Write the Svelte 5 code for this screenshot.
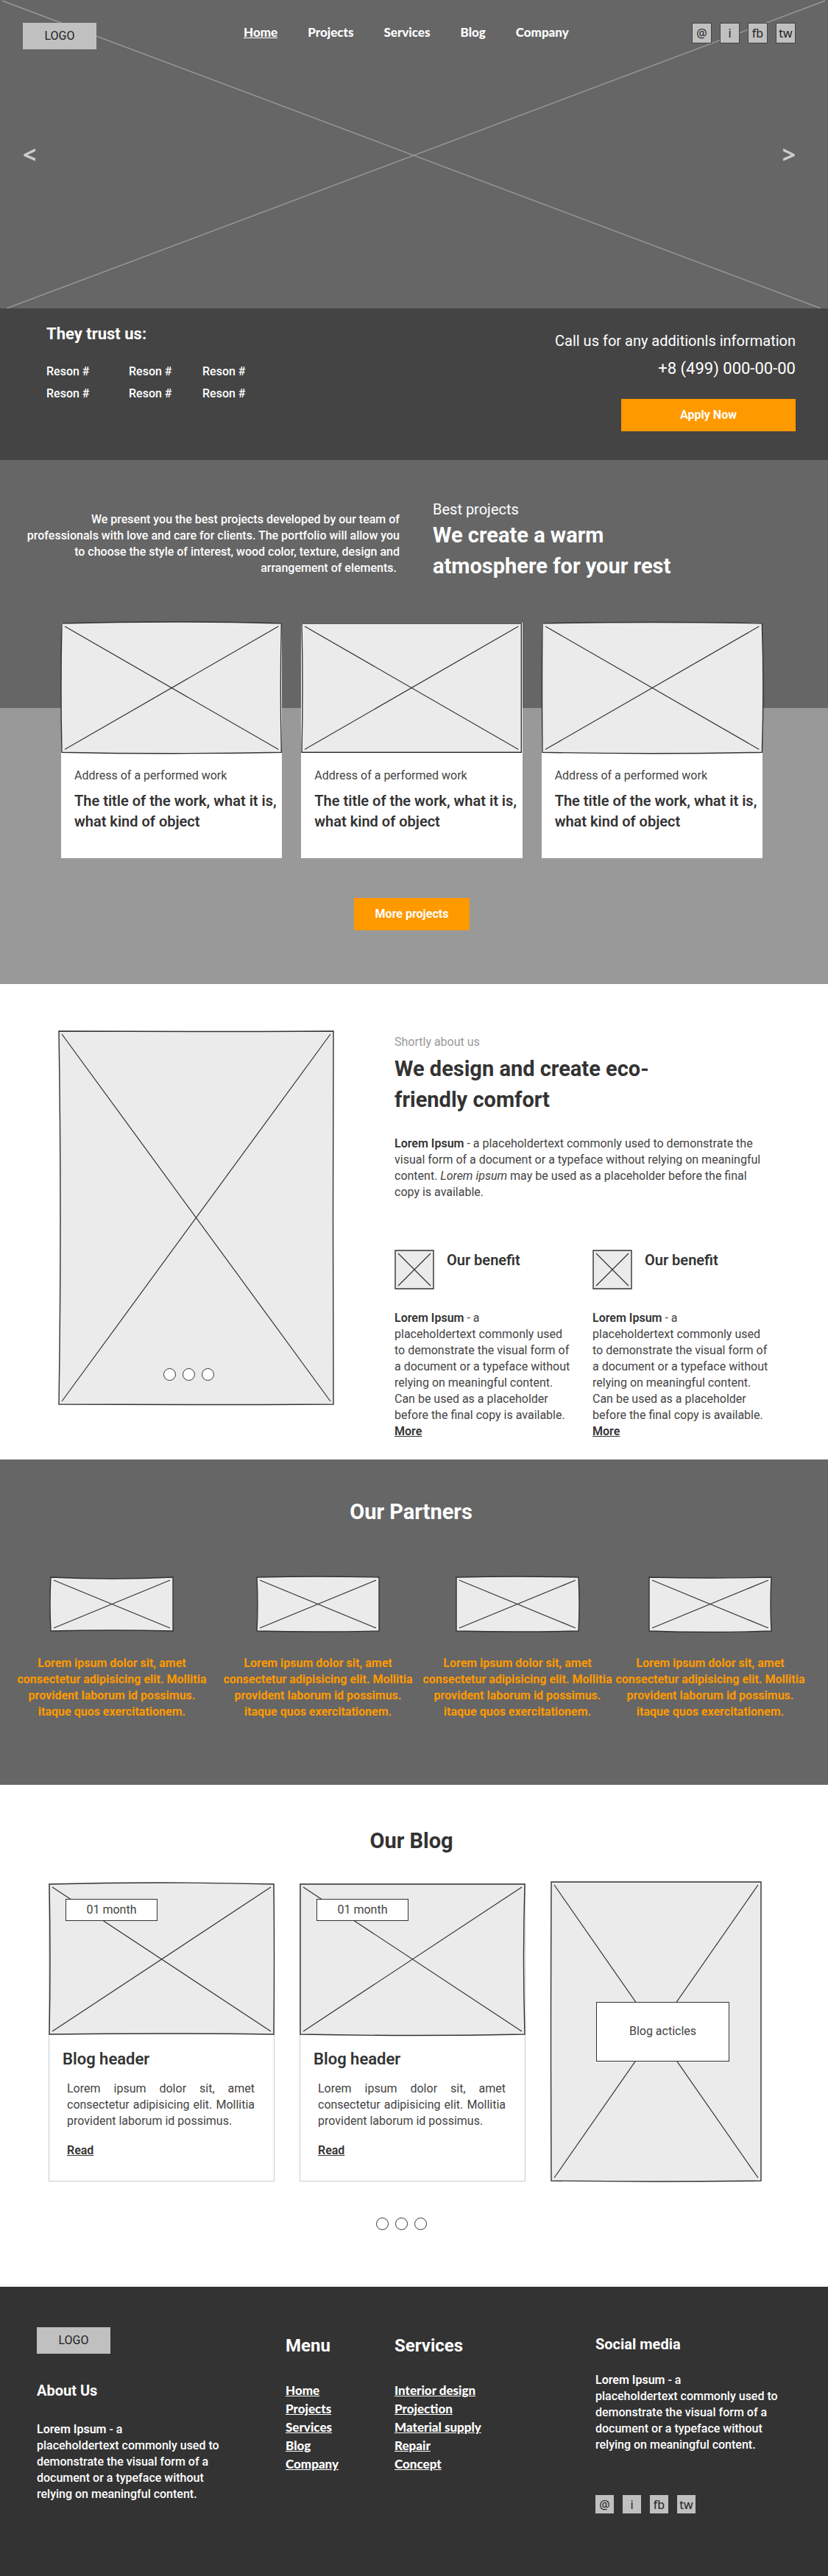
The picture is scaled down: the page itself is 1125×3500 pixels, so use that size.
<script>
  const menu = ['Home', 'Projects', 'Services', 'Blog', 'Company'];
  const services = ['Interior design', 'Projection', 'Material supply', 'Repair', 'Concept'];
  const socials = [
    { text: '@', label: 'Email' },
    { text: 'i', label: 'Instagram' },
    { text: 'fb', label: 'Facebook' },
    { text: 'tw', label: 'Twitter' }
  ];
  // Bow of the hand-drawn edges: top, right, bottom, left
  const projects = [[-4, -2, 3, -2], [0, 0, 0, 2], [-3, 3, 3, -1]];
  const partners = [[4, 0, -2, -2], [-2, 0, 2, 2], [-2, 2, 2, 0], [2, -2, 3, 0]];
  const posts = [[-4, 1, -2, 2], [0, -3, 3, 0]];
</script>

{#snippet sketch(w, h, [t, r, b, l])}
  <svg class="sketch" viewBox="0 0 {w} {h}" preserveAspectRatio="none" aria-hidden="true">
    <path
      class="frame"
      d="M1 1Q{w / 2} {1 + t} {w - 1} 1Q{w - 1 + r} {h / 2} {w - 1} {h - 1}Q{w / 2} {h - 1 + b} 1 {h - 1}Q{1 + l} {h / 2} 1 1Z"
    />
    <path class="cross" d="M5 5L{w - 5} {h - 5}M{w - 5} 5L5 {h - 5}" />
  </svg>
{/snippet}

{#snippet social(boxed)}
  <div class="social" class:boxed>
    {#each socials as s}
      <a href="#social" aria-label={s.label}>{s.text}</a>
    {/each}
  </div>
{/snippet}

{#snippet dots(name)}
  <div class="dots">
    {#each [1, 2, 3] as n}
      <button type="button" aria-label="{name} {n}"></button>
    {/each}
  </div>
{/snippet}

<div class="page">
  <header class="hero">
    <svg class="hero-cross" viewBox="0 0 1125 419" preserveAspectRatio="none" aria-hidden="true">
      <path d="M3 1L1115 419M1121 1L9 419" />
    </svg>
    <div class="topbar">
      <a class="logo" href="#home">LOGO</a>
      <nav class="nav" aria-label="Main">
        {#each menu as item, i}
          <a href="#{item.toLowerCase()}" class:active={i === 0}>{item}</a>
        {/each}
      </nav>
      {@render social(true)}
    </div>
    <div class="arrows">
      <button type="button" aria-label="Previous slide">&lt;</button>
      <button type="button" aria-label="Next slide">&gt;</button>
    </div>
  </header>

  <section class="trust">
    <div>
      <h2 class="h22">They trust us:</h2>
      <ul class="reasons">
        {#each Array(6) as _}
          <li>Reson #</li>
        {/each}
      </ul>
    </div>
    <div class="call">
      <p class="call-text">Call us for any additionls information</p>
      <p class="phone">+8 (499) 000-00-00</p>
      <button type="button" class="cta apply">Apply Now</button>
    </div>
  </section>

  <section class="best">
    <div class="intro">
      <p class="intro-text">
        We present you the best projects developed by our team of professionals with love and care for clients. The
        portfolio will allow you to choose the style of interest, wood color, texture, design and arrangement of
        elements.&nbsp;
      </p>
      <div>
        <p class="kicker">Best projects</p>
        <h2 class="h28 intro-title">We create a warm atmosphere for your rest</h2>
      </div>
    </div>
    <div class="works">
      <div class="work-row">
        {#each projects as bow}
          <article class="work">
            <div class="work-pic">{@render sketch(300, 177, bow)}</div>
            <div class="work-body">
              <p>Address of a performed work</p>
              <h3>The title of the work, what it is, what kind of object</h3>
            </div>
          </article>
        {/each}
      </div>
      <button type="button" class="cta more-projects">More projects</button>
    </div>
  </section>

  <section class="about">
    <div class="about-pic">
      {@render sketch(375, 509, [1, -1, 1, 4])}
      {@render dots('Photo')}
    </div>
    <div class="about-body">
      <p class="muted">Shortly about us</p>
      <h2 class="h28 about-title">We design and create eco-friendly comfort</h2>
      <p class="about-text">
        <b>Lorem Ipsum</b> - a placeholdertext commonly used to demonstrate the visual form of a document or a typeface
        without relying on meaningful content. <i>Lorem ipsum</i> may be used as a placeholder before the final copy is
        available.
      </p>
      <div class="benefits">
        {#each [1, 2] as _}
          <article>
            <div class="benefit-head">
              <div class="benefit-pic">{@render sketch(54, 54, [0, 0, 0, 0])}</div>
              <h3>Our benefit</h3>
            </div>
            <p>
              <b>Lorem Ipsum</b> - a<br />placeholdertext commonly used to demonstrate the visual form of a document or a
              typeface without relying on meaningful content. Can be used as a placeholder before the final copy is
              available.
            </p>
            <a class="more" href="#benefit">More</a>
          </article>
        {/each}
      </div>
    </div>
  </section>

  <section class="partners">
    <h2 class="h28">Our Partners</h2>
    <div class="partner-row">
      {#each partners as bow}
        <article class="partner">
          <div class="partner-pic">{@render sketch(168, 75, bow)}</div>
          <p>Lorem ipsum dolor sit, amet consectetur adipisicing elit. Mollitia provident laborum id possimus. itaque quos exercitationem.</p>
        </article>
      {/each}
    </div>
  </section>

  <section class="blog">
    <h2 class="h28">Our Blog</h2>
    <div class="posts">
      {#each posts as bow}
        <article class="post">
          <div class="post-pic">
            {@render sketch(307, 206, bow)}
            <span class="tag">01 month</span>
          </div>
          <div class="post-body">
            <h3 class="h22">Blog header</h3>
            <p>Lorem ipsum dolor sit, amet consectetur adipisicing elit. Mollitia provident laborum id possimus.</p>
            <a class="more" href="#post">Read</a>
          </div>
        </article>
      {/each}
      <div class="articles">
        {@render sketch(287, 408, [0, 0, 2, -1])}
        <a href="#articles">Blog acticles</a>
      </div>
    </div>
    {@render dots('Posts page')}
  </section>

  <footer class="footer">
    <div>
      <a class="logo" href="#home">LOGO</a>
      <h2 class="h20 about-us">About Us</h2>
      <p>
        <b>Lorem Ipsum</b> - a<br />placeholdertext commonly used to demonstrate the visual form of a document or a
        typeface without relying on meaningful content.
      </p>
    </div>
    <nav class="links" aria-label="Menu">
      <h2 class="h24">Menu</h2>
      {#each menu as item}
        <a href="#{item.toLowerCase()}">{item}</a>
      {/each}
    </nav>
    <nav class="links" aria-label="Services">
      <h2 class="h24">Services</h2>
      {#each services as item}
        <a href="#services">{item}</a>
      {/each}
    </nav>
    <div class="media">
      <h2 class="h20">Social media</h2>
      <p>
        <b>Lorem Ipsum</b> - a<br />placeholdertext commonly used to demonstrate the visual form of a document or a
        typeface without relying on meaningful content.
      </p>
      {@render social(false)}
    </div>
  </footer>
</div>

<style>
  :global(body) {
    margin: 0;
    background: #fff;
  }
  .page {
    font: 16px/22px Roboto, sans-serif;
    color: #444;
  }
  .page :is(h2, h3, p, ul) {
    margin: 0;
    padding: 0;
  }
  .page :is(div, a, button, article) {
    box-sizing: border-box;
  }
  button {
    font: inherit;
    margin: 0;
    padding: 0;
    border: 0;
    border-radius: 0;
    cursor: pointer;
  }
  a {
    color: inherit;
    text-decoration: none;
  }
  b,
  .more {
    font-weight: 600;
    color: #333;
  }
  h2,
  h3 {
    font-weight: 600;
    color: #333;
  }
  .h28 {
    font-size: 29px;
    line-height: 42px;
    font-weight: 700;
  }
  .h24 {
    font-size: 24px;
    line-height: 28px;
  }
  .h22 {
    font-size: 22px;
    line-height: 28px;
  }
  .h20,
  h3:not(.h22) {
    font-size: 20px;
    line-height: 28px;
  }
  .more {
    display: inline-block;
    text-decoration: underline;
  }
  .sketch {
    position: absolute;
    inset: 0;
    width: 100%;
    height: 100%;
    overflow: visible;
  }
  .sketch path {
    stroke: #333;
    vector-effect: non-scaling-stroke;
  }
  .frame {
    fill: #ebebeb;
    stroke-width: 1.4;
  }
  .cross {
    fill: none;
    stroke-width: 1.2;
  }

  .logo {
    display: flex;
    align-items: center;
    justify-content: center;
    width: 100px;
    height: 36px;
    background: #c0c0c0;
    color: #222;
  }
  .social {
    display: flex;
    gap: 12px;
  }
  .social a {
    display: flex;
    align-items: center;
    justify-content: center;
    width: 25px;
    height: 25px;
    background: #c0c0c0;
    color: #222;
    font-family: 'Noto Sans', sans-serif;
  }
  .social.boxed {
    gap: 11px;
  }
  .social.boxed a {
    width: 27px;
    height: 28px;
    border: 1px solid #444;
  }
  .dots {
    display: flex;
    justify-content: center;
    gap: 9px;
  }
  .dots button {
    width: 17px;
    height: 17px;
    border: 1px solid #333;
    border-radius: 50%;
    background: #fff;
  }
  .cta {
    display: block;
    height: 44px;
    background: #f90;
    color: #fff;
    font-weight: 700;
  }

  .hero {
    position: relative;
    padding: 31px 44px 193px 31px;
    background: #666;
  }
  .hero-cross {
    position: absolute;
    inset: 0;
    width: 100%;
    height: 100%;
  }
  .hero-cross path {
    fill: none;
    stroke: #999;
    stroke-width: 1.4;
    vector-effect: non-scaling-stroke;
  }
  .topbar {
    position: relative;
    display: grid;
    grid-template-columns: 300px 1fr auto;
    align-items: start;
  }
  .nav {
    display: flex;
    gap: 41px;
    padding-top: 3px;
    font: 900 17px/20px Lato, sans-serif;
    color: #fff;
  }
  .active {
    text-decoration: underline;
  }
  .arrows {
    position: relative;
    display: flex;
    justify-content: space-between;
    margin-top: 127px;
  }
  .arrows button {
    background: none;
    color: #ccc;
    font: 700 32px/32px 'Open Sans', sans-serif;
  }

  .trust {
    display: flex;
    justify-content: space-between;
    padding: 21px 44px 39px 63px;
    background: #444;
    color: #fff;
  }
  .trust h2,
  .best h2,
  .partners h2,
  .footer h2,
  .footer b {
    color: #fff;
  }
  .trust h2,
  .footer h2 {
    font-weight: 700;
  }
  .reasons,
  .intro-text,
  .footer p {
    font-weight: 500;
  }
  .reasons {
    display: grid;
    grid-template-columns: 112px 100px auto;
    justify-content: start;
    margin-top: 22px !important;
    line-height: 30px;
    list-style: none;
  }
  .call {
    display: flex;
    flex-direction: column;
    align-items: flex-end;
    padding-top: 9px;
    line-height: 28px;
  }
  .call-text {
    font-size: 20px;
  }
  .page .phone {
    margin-top: 10px;
    font-size: 22px;
  }
  .apply {
    width: 237px;
    margin-top: 27px;
  }

  .best {
    padding: 53px 0 73px;
    background: linear-gradient(#666 337px, #999 337px);
    color: #fff;
  }
  .intro {
    display: grid;
    grid-template-columns: 543fr 537fr;
    gap: 45px;
  }
  .page .intro-text {
    max-width: 516px;
    margin-left: auto;
    padding-top: 17px;
    text-align: right;
  }
  .kicker {
    font-size: 20px;
    line-height: 28px;
  }
  .intro-title {
    max-width: 350px;
  }
  .works {
    padding: 56px 89px 0 83px;
  }
  .work-row {
    display: grid;
    grid-template-columns: repeat(3, 1fr);
    gap: 26px;
  }
  .work {
    background: #fff;
    color: #444;
  }
  .work-pic {
    position: relative;
    aspect-ratio: 300 / 177;
  }
  .work-body {
    padding: 20px 2px 36px 18px;
  }
  .page .work-body h3 {
    margin-top: 9px;
  }
  .more-projects {
    width: 157px;
    margin: 54px auto 0;
  }

  .about {
    display: grid;
    grid-template-columns: 375fr 525fr;
    align-items: start;
    gap: 82px;
    padding: 63px 64px 27px 79px;
  }
  .about-pic {
    position: relative;
    display: flex;
    align-items: flex-end;
    justify-content: center;
    aspect-ratio: 375 / 509;
    padding: 0 20px 33px 0;
  }
  .about-pic .dots {
    position: relative;
  }
  .about-body {
    padding-top: 5px;
  }
  .muted {
    color: #999;
  }
  .page .about-title {
    max-width: 400px;
    margin-top: 4px;
  }
  .page .about-text {
    max-width: 516px;
    margin-top: 28px;
  }
  .benefits {
    display: grid;
    grid-template-columns: 1fr 1fr;
    gap: 26px;
    max-width: 512px;
    margin-top: 67px;
  }
  .benefit-head {
    display: flex;
    gap: 17px;
    margin-bottom: 28px;
  }
  .benefit-pic {
    position: relative;
    width: 54px;
    height: 54px;
  }

  .partners {
    padding: 50px 29px 88px 21px;
    background: #666;
    text-align: center;
  }
  .partner-row {
    display: grid;
    grid-template-columns: 280fr 271fr 262fr 262fr;
    margin-top: 67px;
  }
  .partner {
    width: 262px;
    color: #f90;
    font-weight: 700;
  }
  .partner-pic {
    position: relative;
    width: 168px;
    height: 75px;
    margin: 0 auto 32px;
  }

  .blog {
    padding: 55px 73px 77px 66px;
  }
  .blog h2 {
    text-align: center;
  }
  .posts {
    display: grid;
    grid-template-columns: 307fr 307fr 287fr;
    gap: 34px;
    margin-top: 34px;
    padding-right: 17px;
  }
  .post {
    align-self: end;
    background: #fff;
    box-shadow: inset 0 0 0 1px #ccc;
  }
  .post-pic {
    position: relative;
    aspect-ratio: 307 / 206;
    padding: 21px 0 0 23px;
  }
  .tag {
    position: relative;
    display: block;
    box-sizing: border-box;
    width: 125px;
    border: 1px solid #333;
    background: #fff;
    line-height: 28px;
    text-align: center;
  }
  .post-body {
    padding: 19px 27px 31px 25px;
  }
  .page .post-body h3 {
    margin: 0 0 15px -6px;
  }
  .page .post-body p {
    margin-bottom: 18px;
    text-align: justify;
  }
  .articles {
    position: relative;
    display: flex;
    align-items: center;
    justify-content: center;
    min-height: 408px;
  }
  .articles a {
    position: relative;
    display: flex;
    align-items: center;
    justify-content: center;
    width: 181px;
    height: 81px;
    margin-left: 18px;
    border: 1px solid #333;
    background: #fff;
  }
  .blog > .dots {
    margin-top: 49px;
    padding-right: 27px;
  }
  .blog > .dots button,
  .about-pic .dots button {
    display: block;
  }

  .footer {
    display: grid;
    grid-template-columns: 338fr 148fr 273fr 266fr;
    padding: 55px 50px 85px;
    background: #333;
    color: #fff;
  }
  .footer p {
    max-width: 264px;
  }
  .page .about-us {
    margin: 36px 0 28px;
  }
  .links {
    display: flex;
    flex-direction: column;
    align-items: flex-start;
    padding-top: 11px;
    font: 900 17px/25px Lato, sans-serif;
  }
  .page .links h2 {
    margin-bottom: 34px;
    font-family: Roboto, sans-serif;
  }
  .links a {
    text-decoration: underline;
  }
  .media {
    padding-top: 9px;
  }
  .page .media h2 {
    margin-bottom: 24px;
  }
  .media .social {
    margin-top: 57px;
  }
</style>
